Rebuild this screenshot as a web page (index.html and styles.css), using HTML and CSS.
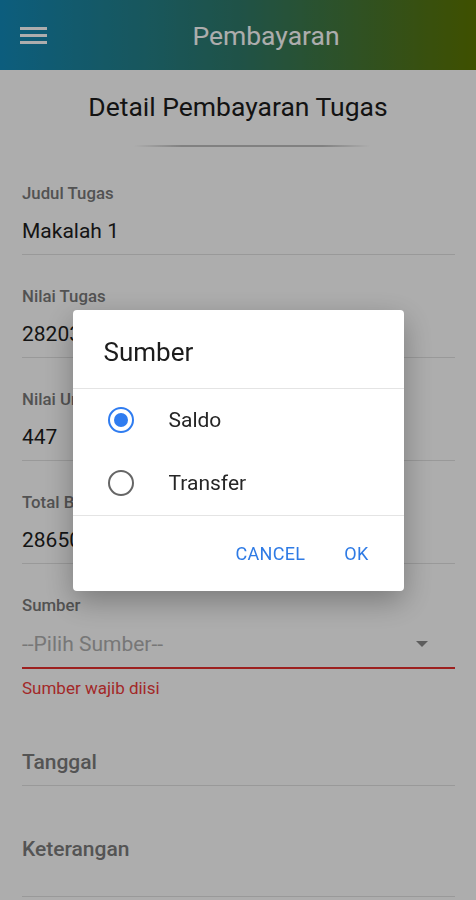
FILE: index.html
```html
<!DOCTYPE html>
<html>
  <head>
    <title>Pembayaran</title>
    <link rel="stylesheet" href="styles.css">
  </head>
  <body>
    <header class="appbar">
      <div class="menu-btn">
        <span></span>
        <span></span>
        <span></span>
      </div>
      <div class="appbar-title">Pembayaran</div>
    </header>

    <h1 class="page-title">Detail Pembayaran Tugas</h1>
    <div class="title-rule"></div>

    <form class="pay-form">
      <div class="field">
        <label>Judul Tugas</label>
        <div class="value">Makalah 1</div>
      </div>
      <div class="field">
        <label>Nilai Tugas</label>
        <div class="value">282030</div>
      </div>
      <div class="field">
        <label>Nilai Unik</label>
        <div class="value">447</div>
      </div>
      <div class="field">
        <label>Total Bayar</label>
        <div class="value">286500</div>
      </div>
      <div class="field field-error">
        <label>Sumber</label>
        <div class="select">
          <span class="placeholder">--Pilih Sumber--</span>
          <span class="caret"></span>
        </div>
      </div>
      <div class="error-text">Sumber wajib diisi</div>
      <div class="field field-empty">
        <div class="empty-label">Tanggal</div>
      </div>
      <div class="field field-empty field-area">
        <div class="empty-label">Keterangan</div>
      </div>
    </form>

    <div class="overlay">
      <div class="dialog">
        <div class="dialog-title">Sumber</div>
        <div class="dialog-list">
          <div class="option">
            <span class="radio radio-on"></span>
            <span class="option-text">Saldo</span>
          </div>
          <div class="option">
            <span class="radio"></span>
            <span class="option-text">Transfer</span>
          </div>
        </div>
        <div class="dialog-actions">
          <span class="btn">CANCEL</span>
          <span class="btn">OK</span>
        </div>
      </div>
    </div>
  </body>
</html>
```

FILE: styles.css
```css
body {
  margin: 0;
  background: #ffffff;
  font-family: Roboto, "Liberation Sans", sans-serif;
  color: #222;
}

/* top bar */
.appbar {
  height: 70px;
  display: flex;
  align-items: center;
  padding-left: 20px;
  background: linear-gradient(to right, #138ab9, #2f7a6a 50%, #5d7600);
}

.menu-btn {
  width: 36px;
  display: flex;
  flex-direction: column;
  gap: 4px;
}

.menu-btn span {
  display: block;
  width: 27px;
  height: 3px;
  background: #ffffff;
}

.appbar-title {
  flex: 1;
  text-align: center;
  color: #ffffff;
  font-size: 26.5px;
}

/* page heading */
.page-title {
  margin: 21px 0 0;
  font-size: 26.5px;
  font-weight: 400;
  line-height: 32px;
  text-align: center;
  color: #1c1c1c;
}

.title-rule {
  width: 236px;
  height: 2px;
  margin: 22px 0 0 134px;
  background: linear-gradient(to right, rgba(0,0,0,0), rgba(0,0,0,0.25) 20%, rgba(0,0,0,0.25) 80%, rgba(0,0,0,0));
}

/* form */
.pay-form {
  padding: 36px 21px 0 22px;
}

.field {
  border-bottom: 1px solid #e2e2e2;
  padding-bottom: 11px;
  margin-bottom: 31px;
}

.field label {
  display: block;
  font-size: 16.8px;
  line-height: 20px;
  font-weight: 500;
  color: #7a7a7a;
}

.value {
  margin-top: 16px;
  font-size: 21px;
  line-height: 24px;
  color: #1e1e1e;
}

.field-error {
  border-bottom: 2px solid #e8302e;
  margin-bottom: 0;
}

.select {
  margin-top: 17px;
  display: flex;
  align-items: center;
  justify-content: space-between;
  padding-right: 27px;
}

.placeholder {
  font-size: 21px;
  line-height: 24px;
  color: #b0b0b0;
}

.caret {
  width: 0;
  height: 0;
  border-left: 6px solid transparent;
  border-right: 6px solid transparent;
  border-top: 6px solid #8a8a8a;
}

.error-text {
  margin-top: 9px;
  font-size: 17px;
  line-height: 20px;
  color: #f03c3c;
}

.field-empty {
  margin-top: 52px;
  margin-bottom: 0;
}

.field-area {
  margin-top: 51px;
  padding-bottom: 35px;
}

.empty-label {
  font-size: 21px;
  line-height: 24px;
  font-weight: 500;
  color: #7c7c7c;
}

/* modal */
.overlay {
  position: fixed;
  inset: 0;
  background: rgba(0, 0, 0, 0.32);
  display: flex;
  align-items: center;
  justify-content: center;
}

.dialog {
  width: 331px;
  height: 281px;
  background: #ffffff;
  border-radius: 4px;
  box-shadow: 0 10px 30px rgba(0, 0, 0, 0.3);
  display: flex;
  flex-direction: column;
}

.dialog-title {
  padding: 28px 31px 22px;
  font-size: 26px;
  line-height: 28px;
  color: #1c1c1c;
  border-bottom: 1px solid #e4e4e4;
}

.dialog-list {
  border-bottom: 1px solid #e4e4e4;
}

.option {
  height: 63px;
  display: flex;
  align-items: center;
  padding-left: 35px;
}

.radio {
  box-sizing: border-box;
  width: 26px;
  height: 26px;
  border-radius: 50%;
  border: 2px solid #666666;
  display: flex;
  align-items: center;
  justify-content: center;
}

.radio-on {
  border-color: #2f7cf0;
}

.radio-on::after {
  content: "";
  width: 14px;
  height: 14px;
  border-radius: 50%;
  background: #2f7cf0;
}

.option-text {
  margin-left: 35px;
  font-size: 21px;
  color: #262626;
}

.dialog-actions {
  flex: 1;
  display: flex;
  align-items: center;
  justify-content: flex-end;
  gap: 39px;
  padding-right: 35px;
}

.btn {
  font-size: 18px;
  color: #2f7be5;
  letter-spacing: 0.3px;
}
```
